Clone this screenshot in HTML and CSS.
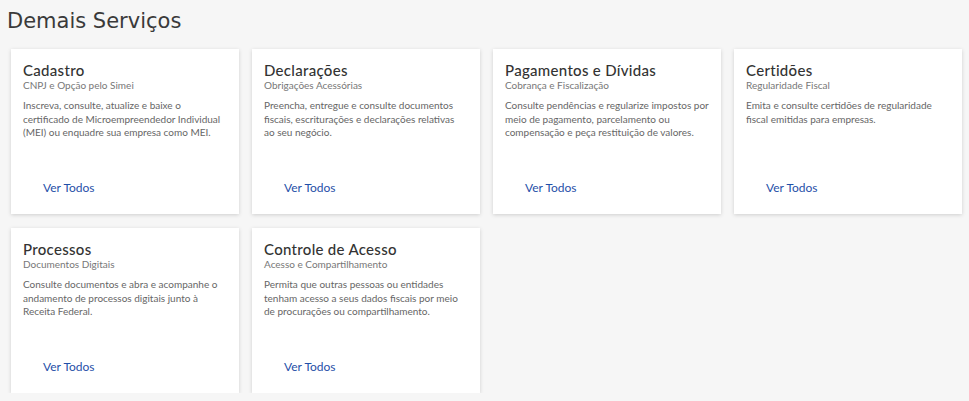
FILE: index.html
```html
<!DOCTYPE html>
<html lang="pt-BR">
<head>
<meta charset="utf-8">
<title>Demais Serviços</title>
<link rel="stylesheet" href="styles.css">
</head>
<body>
<main class="page">
  <h1 class="page-title">Demais Serviços</h1>
  <div class="grid">
    <section class="card">
      <h2 class="card-title">Cadastro</h2>
      <p class="card-sub">CNPJ e Opção pelo Simei</p>
      <p class="card-text">Inscreva, consulte, atualize e baixe o certificado de Microempreendedor Individual (MEI) ou enquadre sua empresa como MEI.</p>
      <a class="card-link" href="#">Ver Todos</a>
    </section>
    <section class="card">
      <h2 class="card-title">Declarações</h2>
      <p class="card-sub">Obrigações Acessórias</p>
      <p class="card-text">Preencha, entregue e consulte documentos fiscais, escriturações e declarações relativas ao&nbsp;seu negócio.</p>
      <a class="card-link" href="#">Ver Todos</a>
    </section>
    <section class="card">
      <h2 class="card-title">Pagamentos e Dívidas</h2>
      <p class="card-sub">Cobrança e Fiscalização</p>
      <p class="card-text">Consulte pendências e regularize impostos por meio de pagamento, parcelamento ou compensação e peça restituição de valores.</p>
      <a class="card-link" href="#">Ver Todos</a>
    </section>
    <section class="card">
      <h2 class="card-title">Certidões</h2>
      <p class="card-sub">Regularidade Fiscal</p>
      <p class="card-text">Emita e consulte certidões de regularidade fiscal emitidas para empresas.</p>
      <a class="card-link" href="#">Ver Todos</a>
    </section>
    <section class="card">
      <h2 class="card-title">Processos</h2>
      <p class="card-sub">Documentos Digitais</p>
      <p class="card-text">Consulte documentos e abra e acompanhe o andamento de processos digitais junto à Receita Federal.</p>
      <a class="card-link" href="#">Ver Todos</a>
    </section>
    <section class="card">
      <h2 class="card-title">Controle de Acesso</h2>
      <p class="card-sub">Acesso e Compartilhamento</p>
      <p class="card-text">Permita que outras pessoas ou entidades tenham acesso a seus dados fiscais por meio de procurações ou compartilhamento.</p>
      <a class="card-link" href="#">Ver Todos</a>
    </section>
  </div>
</main>
</body>
</html>
```
FILE: styles.css
```css
* { box-sizing: border-box; }
html, body { margin: 0; padding: 0; }
body {
  background: #f6f6f6;
  font-family: "Lato", "Open Sans", sans-serif;
  color: #333;
}
.page {
  padding: 6px 0 0 7px;
}
.page-title {
  margin: 0;
  font-family: "DejaVu Sans", sans-serif;
  font-weight: 400;
  font-size: 21px;
  line-height: 30px;
  color: #3a3a3a;
}
.grid {
  display: grid;
  grid-template-columns: repeat(4, 228px);
  column-gap: 13px;
  row-gap: 14px;
  margin: 13px 0 0 4px;
}
.card {
  background: #fff;
  height: 165px;
  padding: 13px 12px 0 12px;
  box-shadow: 0 1px 4px rgba(0, 0, 0, 0.16);
  display: flex;
  flex-direction: column;
}
.card-title {
  margin: 0;
  font-size: 15px;
  font-weight: 500;
  line-height: 16px;
  color: #333;
  letter-spacing: 0.3px;
}
.card-sub {
  margin: 1px 0 0 0;
  font-size: 10px;
  line-height: 13px;
  color: #777;
}
.card-text {
  margin: 7px 0 0 0;
  font-size: 10px;
  line-height: 13.5px;
  color: #666;
}
.card-link {
  margin: auto 0 0 20px;
  padding-bottom: 19px;
  font-size: 12px;
  color: #1f4fa8;
  text-decoration: none;
}
```
